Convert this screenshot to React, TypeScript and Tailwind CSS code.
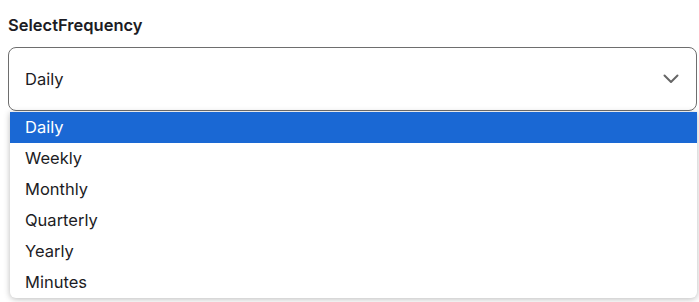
import { useState } from "react";

const options = ["Daily", "Weekly", "Monthly", "Quarterly", "Yearly", "Minutes"];

export default function App() {
  const [selected, setSelected] = useState("Daily");

  return (
    <div className="min-h-screen bg-white pl-2 pr-[2px] pt-[14px] font-['Inter',sans-serif] text-[#1c1c24]">
      <label className="block text-[16.5px] font-semibold leading-[22px]">SelectFrequency</label>
      <div className="relative mt-[11px]">
        <div className="flex h-[64px] items-center justify-between rounded-lg border border-[#6e6e6e] bg-white pl-4 pr-[17px]">
          <span className="text-[16.5px]">{selected}</span>
          <svg width="16" height="10" viewBox="0 0 16 10" fill="none" className="text-[#666]">
            <path d="M1.5 1.5 8 8l6.5-6.5" stroke="currentColor" strokeWidth="2" strokeLinecap="round" strokeLinejoin="round" />
          </svg>
        </div>
        <ul className="absolute left-[2px] right-0 top-full mt-px overflow-hidden rounded-b-md bg-white shadow-[0_1px_6px_rgba(0,0,0,0.28)]">
          {options.map((opt) => (
            <li
              key={opt}
              onClick={() => setSelected(opt)}
              className={`flex h-[31px] items-center pl-[15px] text-[16.5px] ${
                opt === selected ? "bg-[#1a68d4] text-white" : "text-[#1c1c24]"
              }`}
            >
              {opt}
            </li>
          ))}
        </ul>
      </div>
    </div>
  );
}
